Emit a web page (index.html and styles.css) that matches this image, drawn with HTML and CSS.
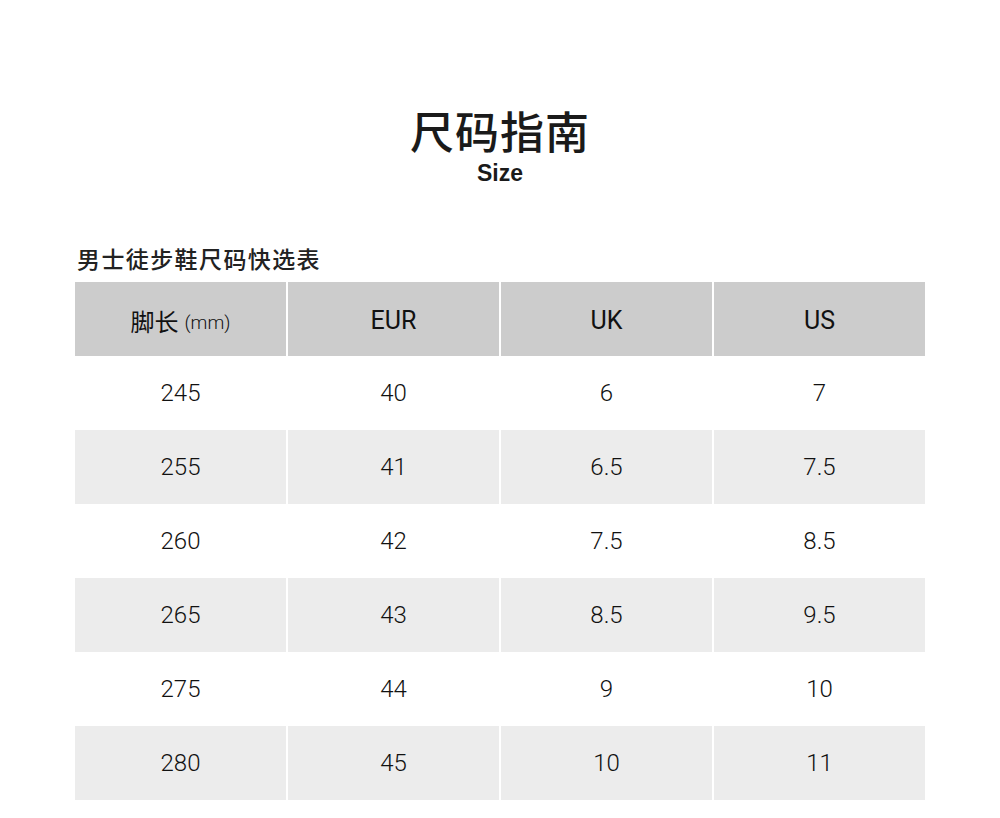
FILE: index.html
```html
<!DOCTYPE html>
<html lang="zh">
<head>
<meta charset="utf-8">
<link rel="stylesheet" href="styles.css">
</head>
<body>
<div class="page">
  <div class="heading">
    <h1 class="title">尺码指南</h1>
    <div class="subtitle">Size</div>
  </div>
  <div class="section-title">男士徒步鞋尺码快选表</div>
  <div class="table">
    <div class="cell head"><span class="cjk">脚长</span><span class="unit">(mm)</span></div>
    <div class="cell head">EUR</div>
    <div class="cell head">UK</div>
    <div class="cell head">US</div>

    <div class="cell">245</div><div class="cell">40</div><div class="cell">6</div><div class="cell">7</div>
    <div class="cell alt">255</div><div class="cell alt">41</div><div class="cell alt">6.5</div><div class="cell alt">7.5</div>
    <div class="cell">260</div><div class="cell">42</div><div class="cell">7.5</div><div class="cell">8.5</div>
    <div class="cell alt">265</div><div class="cell alt">43</div><div class="cell alt">8.5</div><div class="cell alt">9.5</div>
    <div class="cell">275</div><div class="cell">44</div><div class="cell">9</div><div class="cell">10</div>
    <div class="cell alt">280</div><div class="cell alt">45</div><div class="cell alt">10</div><div class="cell alt">11</div>
  </div>
</div>
</body>
</html>
```
FILE: styles.css
```css
html, body {
  margin: 0;
  padding: 0;
  background: #ffffff;
}
body {
  font-family: "Noto Sans CJK SC", "Noto Sans", sans-serif;
  color: #1e1e1e;
}
.page {
  width: 1000px;
  height: 818px;
  overflow: hidden;
  padding: 0 75px;
  box-sizing: border-box;
}
.heading {
  display: flex;
  flex-direction: column;
  align-items: center;
  padding-top: 100px;
}
.title {
  margin: 0;
  font-size: 44px;
  font-weight: 500;
  line-height: 60px;
  letter-spacing: 1px;
  color: #1a1a1a;
}
.subtitle {
  font-family: "Liberation Sans", Arial, sans-serif;
  font-weight: bold;
  font-size: 23px;
  line-height: 26px;
  color: #1a1a1a;
}
.section-title {
  margin-top: 56px;
  padding-left: 2px;
  font-size: 23px;
  line-height: 32px;
  letter-spacing: 1.4px;
  font-weight: 500;
  color: #222;
}
.table {
  margin-top: 8px;
  display: grid;
  grid-template-columns: repeat(4, 1fr);
  grid-auto-rows: 74px;
  column-gap: 2px;
}
.cell {
  display: flex;
  align-items: center;
  justify-content: center;
  font-family: "Roboto", "Noto Sans CJK SC", sans-serif;
  font-size: 24px;
  font-weight: 300;
  color: #111111;
  background: #ffffff;
}
.cell.head {
  background: #cccccc;
  font-size: 25px;
  font-weight: 400;
  padding-top: 2px;
}
.cell.alt {
  background: #ececec;
}
.cjk {
  font-family: "Noto Sans CJK SC", sans-serif;
  font-weight: 400;
  font-size: 24px;
}
.unit {
  font-size: 19px;
  font-weight: 300;
  margin-left: 6px;
  margin-top: 4px;
}
```
